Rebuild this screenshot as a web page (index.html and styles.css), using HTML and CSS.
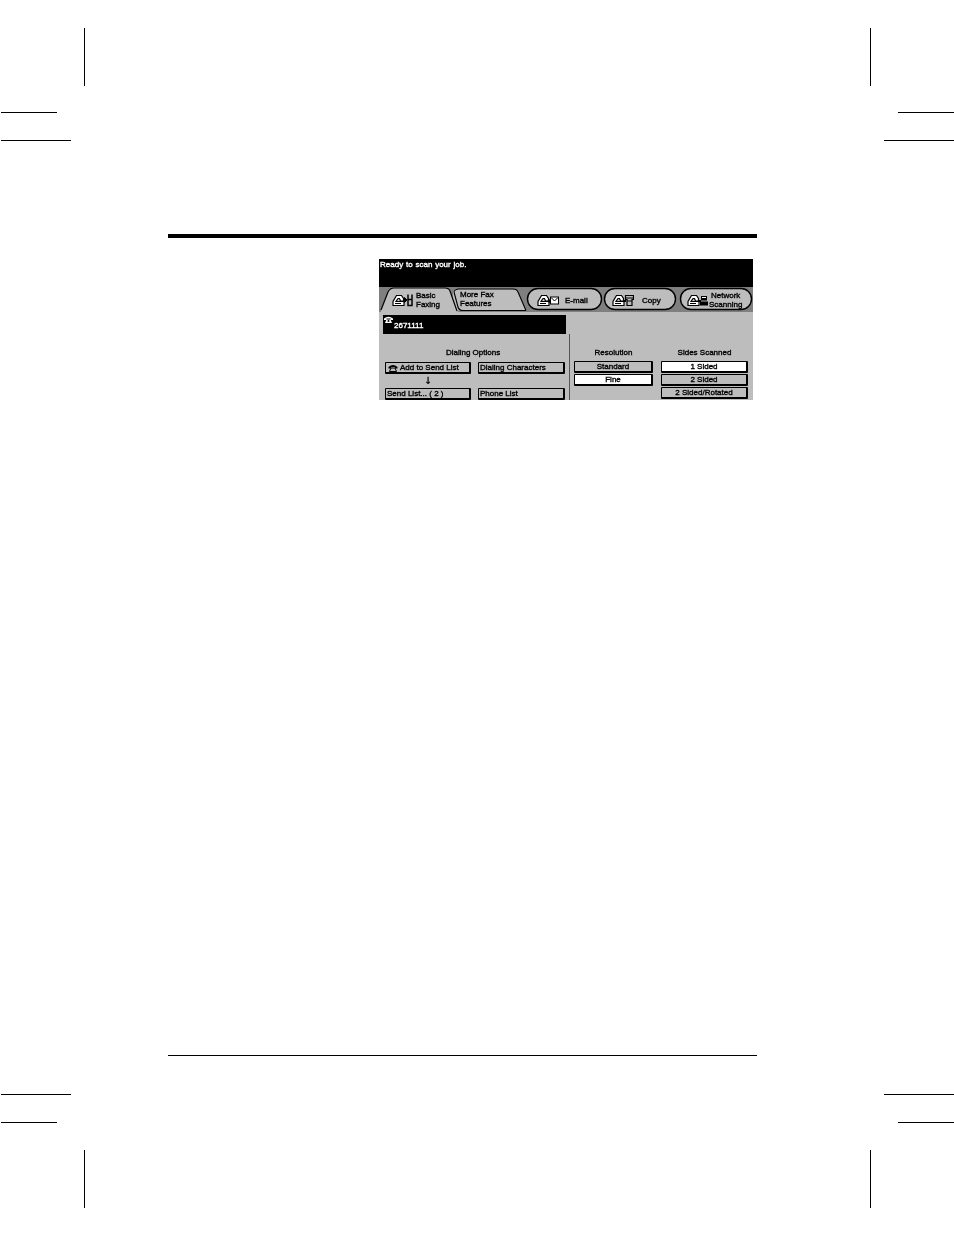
FILE: index.html
```html
<!DOCTYPE html>
<html lang="en">
<head>
<meta charset="utf-8">
<title>Basic Faxing</title>
<link rel="stylesheet" href="styles.css">
</head>
<body>
<div class="mark v" style="left:84px;top:28px"></div>
<div class="mark v" style="left:870px;top:28px"></div>
<div class="mark v" style="left:84px;top:1150px"></div>
<div class="mark v" style="left:870px;top:1150px"></div>
<div class="mark h" style="left:1px;top:112px;width:56px"></div>
<div class="mark h" style="left:1px;top:140px;width:70px"></div>
<div class="mark h" style="left:898px;top:112px;width:56px"></div>
<div class="mark h" style="left:884px;top:140px;width:70px"></div>
<div class="mark h" style="left:1px;top:1094px;width:70px"></div>
<div class="mark h" style="left:1px;top:1122px;width:56px"></div>
<div class="mark h" style="left:884px;top:1094px;width:70px"></div>
<div class="mark h" style="left:898px;top:1122px;width:56px"></div>

<main class="page">
  <div class="rule-top"></div>
  <section class="screen">
    <div class="status">Ready to scan your job.</div>
    <div class="tabs">
      <svg class="tabshape" width="374" height="25" viewBox="0 0 374 25">
        <path d="M74 23.500 L147 23.500 L139 5 Q138 2 134 2 L80 2 Q76 2 74 4 Z" fill="#bdbdbd"/>
        <path d="M75 5 Q75 3 79 2 L134 2 Q138 2 139 5 L147 23.500 M75 5 L79 20 Q80 23.500 84 23.500 L147 23.500" fill="none" stroke="#000" stroke-width="1.1"/>
        <path d="M2 25 L2 22 L9 5 Q11 1 15 1 L66 1 Q70 1 71 4 L79 25 Z" fill="#bdbdbd"/>
        <path d="M2 23 L9 5 Q11 1 15 1 L66 1 Q70 1 71 4 L78 24" fill="none" stroke="#000" stroke-width="1.2"/>
        <rect class="pill" x="148.500" y="1.500" width="74" height="21" rx="10.500"/>
        <rect class="pill" x="225.500" y="1.500" width="71" height="21" rx="10.500"/>
        <rect class="pill" x="301.500" y="1.500" width="71" height="21" rx="10.500"/>
      </svg>
      <div class="tab t1"><svg class="ico" width="24" height="14" viewBox="0 0 24 14"><use href="#person"/><path d="M11 7h3M12.500 4.500l2.500 2.500-2.500 2.500z" fill="#000" stroke="#000"/><path d="M16 1.500v11h2M20 1.500v11h-2M16 6.500h4" fill="none" stroke="#000" stroke-width="1.500"/></svg><span>Basic<br>Faxing</span></div>
      <div class="tab t2"><span>More Fax<br>Features</span></div>
      <div class="tab t3"><svg class="ico" width="22" height="14" viewBox="0 0 22 14"><use href="#person"/><circle cx="12.500" cy="8" r="1.800" fill="#000"/><rect x="13.500" y="4" width="8" height="7" fill="#fff" stroke="#000"/><path d="M14 4.500l3.500 3.500 3.500-3.500" fill="none" stroke="#000"/></svg><span>E-mail</span></div>
      <div class="tab t4"><svg class="ico" width="22" height="14" viewBox="0 0 22 14"><use href="#person"/><path d="M11 8h3" stroke="#000" stroke-width="2"/><path d="M13.500 2.500h8v4h-1.500v6h-5v-6h-1.500z" fill="#bdbdbd" stroke="#000" stroke-width="1.200"/><path d="M14 5h7M15 8h5" stroke="#000" stroke-width="1.200"/></svg><span>Copy</span></div>
      <div class="tab t5"><svg class="ico" width="21" height="14" viewBox="0 0 21 14"><use href="#person"/><path d="M11 8h3" stroke="#000" stroke-width="2"/><path d="M14 3h6v4.500h-6zM13 8.500h8v4h-8z" fill="#000"/><path d="M15 4.500h4" stroke="#fff"/></svg><span>Network<br>Scanning</span></div>
    </div>
    <svg class="defs" width="0" height="0"><defs><g id="person"><path d="M1 12.500V8.500L4.500 2.500h5l2 3v2.500H8.500L7.500 5.500H6L4 8.500h8v4z" fill="#fff" stroke="#000" stroke-width="1.200"/><path d="M3 10.500h6" stroke="#000"/></g></defs></svg>
    <div class="number"><svg class="phone" width="9" height="7" viewBox="0 0 9 7"><path d="M0 2.500Q4.500-1 9 2.500V4H6.500V2.500h-4V4H0zM2.500 3.500h4L8 7H1z" fill="#fff"/><circle cx="4.500" cy="5" r="1" fill="#000"/></svg><span>2671111</span></div>
    <div class="panel">
      <div class="dial">
        <h3>Dialing Options</h3>
        <div class="dial-grid">
          <div class="col">
            <div class="btn"><svg class="phone2" width="10" height="8" viewBox="0 0 10 8"><path d="M.5 3Q5-1 9.500 3V4.500H7V3H3v1.500H.5z" fill="#000"/><path d="M3 4h4l1.500 3.500h-7z" fill="none" stroke="#000"/></svg>Add to Send List</div>
            <div class="arrow">↓</div>
            <div class="btn">Send List... ( 2 )</div>
          </div>
          <div class="col gap">
            <div class="btn">Dialing Characters</div>
            <div class="btn">Phone List</div>
          </div>
        </div>
      </div>
      <div class="res">
        <h3>Resolution</h3>
        <div class="btn c">Standard</div>
        <div class="btn c on">Fine</div>
      </div>
      <div class="sides">
        <h3>Sides Scanned</h3>
        <div class="btn c on">1 Sided</div>
        <div class="btn c">2 Sided</div>
        <div class="btn c">2 Sided/Rotated</div>
      </div>
    </div>
  </section>
  <div class="rule-bottom"></div>
</main>
</body>
</html>
```
FILE: styles.css
```css
html,body{margin:0;padding:0;background:#fff}
body{width:954px;height:1235px;overflow:hidden;position:relative;font-family:"Liberation Sans",Arial,sans-serif}
.mark{position:absolute;background:#000}
.mark.v{width:1px;height:58px}
.mark.h{height:1px}
.page{width:589px;padding:234px 0 0 168px;display:flex;flex-direction:column}
.rule-top{height:4px;background:#000}
.screen{width:374px;height:141px;margin:21px 0 0 211px;background:#bdbdbd;position:relative;overflow:hidden;font-size:8px;font-weight:400;color:#000;line-height:9px;-webkit-text-stroke:.35px currentColor;will-change:transform}
.status{height:28px;background:#000;color:#fff;padding:1px 1px;box-sizing:border-box;word-spacing:.6px}
.tabs{height:25px;background:#7f7f7f;position:relative}
.tabshape{position:absolute;left:0;top:0}
.pill{fill:#bdbdbd;stroke:#000;stroke-width:1.400}
.tab{position:absolute;top:0;height:26px;display:flex;align-items:center}
.t1{left:13px}.t2{left:81px;top:-1px}.t3{left:158px;gap:6px}.t4{left:233px;gap:8px}.t5{left:308px;gap:1px;text-align:center}
.ico{flex:none}
.defs{position:absolute}
.number{width:183px;height:19px;margin:3px 0 0 4px;background:#000;color:#fff;position:relative;box-sizing:border-box;padding:6px 0 0 11px;font-size:8px}
.phone{position:absolute;left:1px;top:1px}
.panel{display:flex;position:relative;height:66px}
.dial{width:191px;padding:0 0 0 6px;box-sizing:border-box;border-right:1px solid #555;height:66px}
h3{font-size:8px;line-height:9px;margin:0;text-align:center;font-weight:400;padding-top:14px;padding-bottom:5px}
.dial h3{padding-right:8px}
.dial-grid{display:flex;gap:7px}
.col{width:86px;display:flex;flex-direction:column}
.col.gap{width:87px;gap:14px}
.btn{height:12px;box-sizing:border-box;border:1px solid #000;border-right-width:2px;border-bottom-width:2px;border-radius:1px;background:#bdbdbd;padding-left:1px;line-height:10px;white-space:nowrap;display:flex;align-items:center;gap:2px}
.phone2{margin-left:1px;flex:none}
.arrow{height:14px;line-height:14px;text-align:center;font-family:"DejaVu Sans",sans-serif;font-size:10px;font-weight:700;-webkit-text-stroke:0}
.btn.c{justify-content:center;height:12px;margin-bottom:1px;padding:0}
.btn.on{background:#fff}
.res h3,.sides h3{padding-bottom:4px}
.res{width:79px;margin-left:4px}
.sides{width:87px;margin-left:8px}
.rule-bottom{height:1px;background:#000;margin-top:655px}
```
